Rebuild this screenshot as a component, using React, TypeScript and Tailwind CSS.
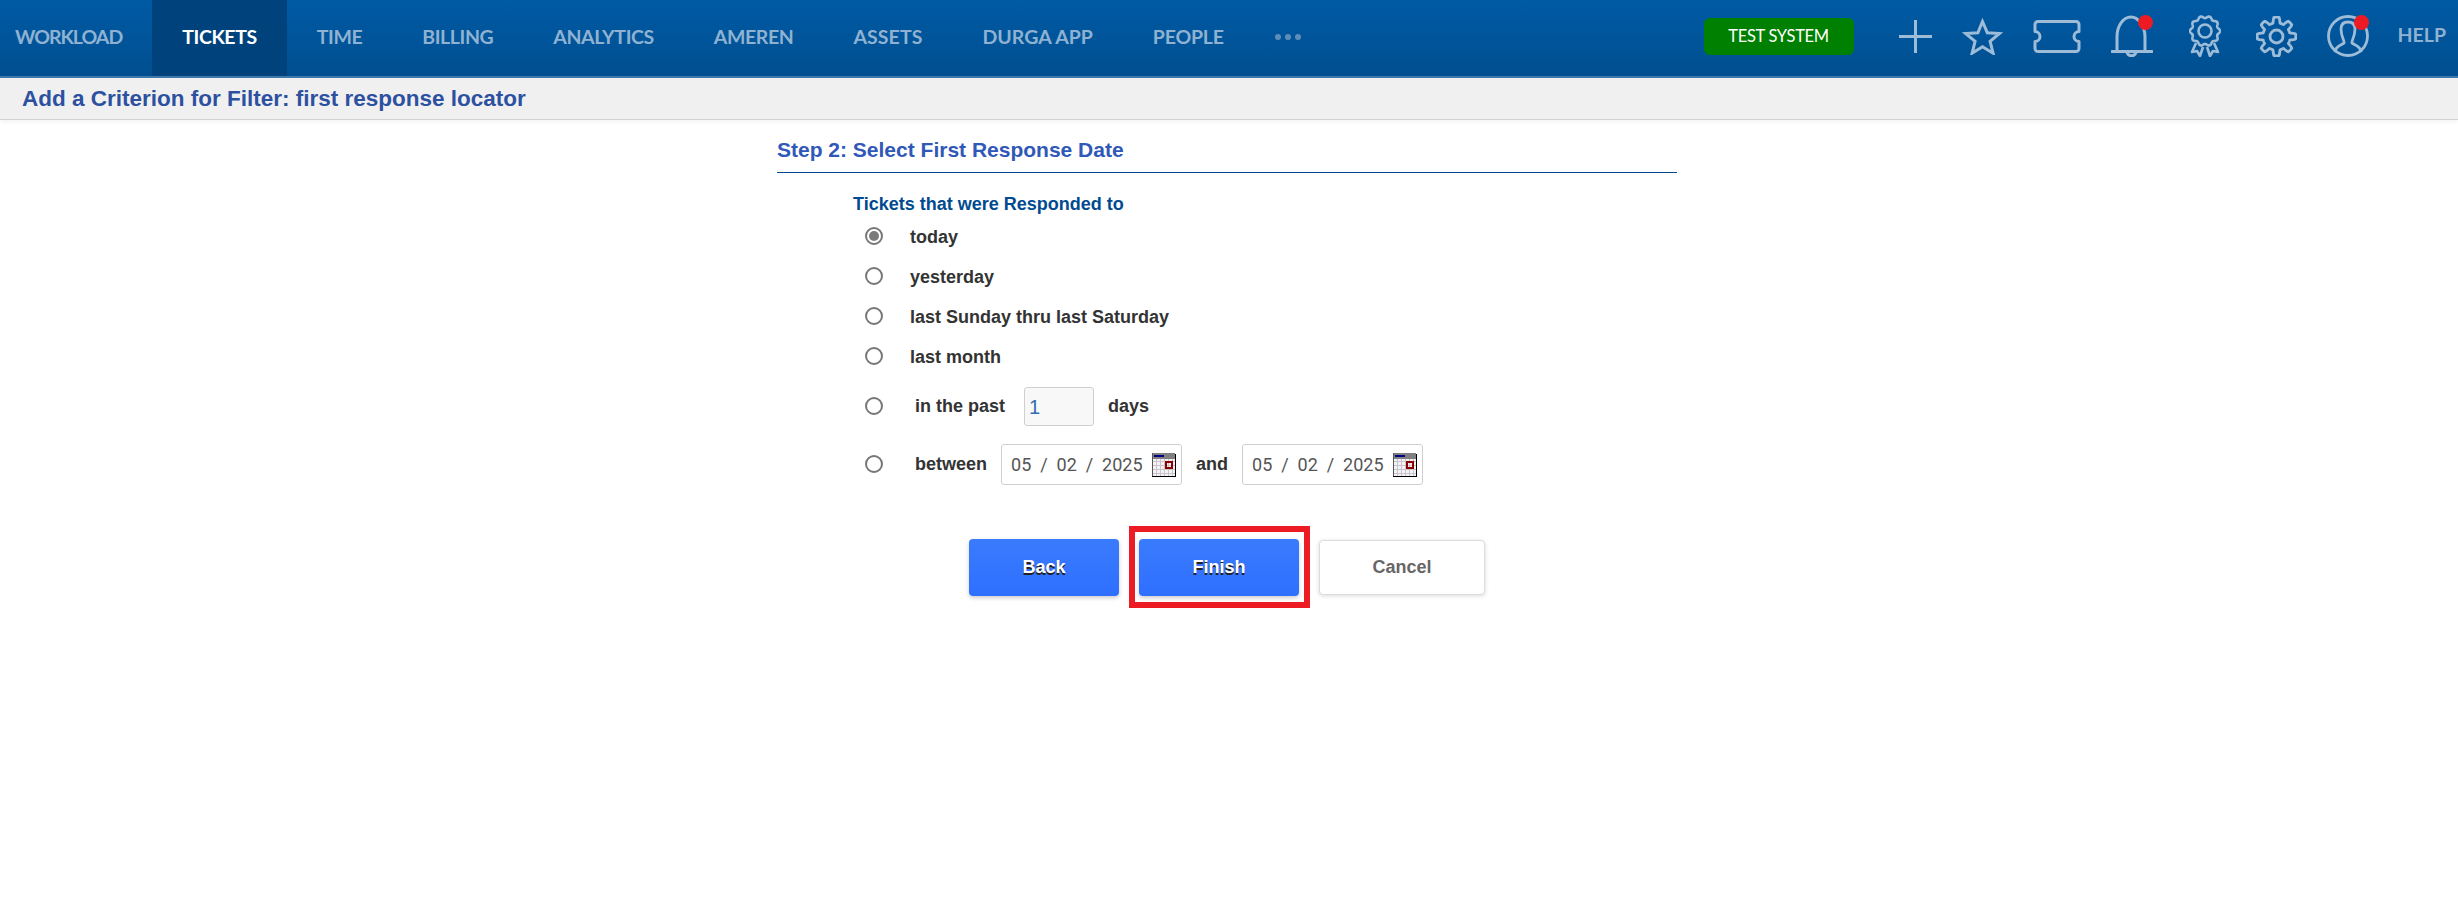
import { Fragment } from 'react';

const NAV_ITEMS = [
  { label: 'TICKETS', track: 'tracking-[-0.4px]' },
  { label: 'TIME', track: 'tracking-[-0.4px]' },
  { label: 'BILLING', track: 'tracking-[-0.4px]' },
  { label: 'ANALYTICS', track: 'tracking-[-0.4px]' },
  { label: 'AMEREN', track: 'tracking-[-0.4px]' },
  { label: 'ASSETS', track: 'tracking-[0.1px]' },
  { label: 'DURGA APP', track: 'tracking-[0px]' },
  { label: 'PEOPLE', track: 'tracking-[-0.2px]' },
];

// outline of a gear or rosette, radius wobbles around the centre
function wavyPath(cx: number, cy: number, r: number, amp: number, lobes: number, sharp: number) {
  const pts: string[] = [];
  for (let i = 0; i < 240; i++) {
    const a = (i / 240) * Math.PI * 2;
    const wave = Math.max(-1, Math.min(1, Math.cos(a * lobes) * sharp));
    const rad = r + amp * wave;
    pts.push(`${(cx + rad * Math.cos(a)).toFixed(2)} ${(cy + rad * Math.sin(a)).toFixed(2)}`);
  }
  return `M${pts.join('L')}Z`;
}

function Badge() {
  return <span className="absolute right-0 top-0 w-[15px] h-[15px] rounded-full bg-[#ed1c24]" />;
}

function HeaderIcons() {
  return (
    <div className="flex items-center gap-[30px] ml-[45px] text-[#9dbcd8]">
      <svg className="w-[33px] h-[33px]" viewBox="0 0 33 33" fill="none" stroke="currentColor" strokeWidth="3">
        <path d="M16.5 0v33M0 16.5h33" />
      </svg>
      <svg className="w-[41px] h-[37px]" viewBox="0 0 41 37" fill="none" stroke="currentColor" strokeWidth="3">
        <path d="M20.5 3.5l4.8 11.2 12 .9-9.2 7.8 3 11.8-10.6-6.4-10.4 6.4 3-11.8-9.4-7.8 12.2-.9z" />
      </svg>
      <svg className="w-[48px] h-[33px]" viewBox="0 0 48 33" fill="none" stroke="currentColor" strokeWidth="3" strokeLinejoin="round">
        <path d="M5 1.5h38a3 3 0 0 1 3 3v7a5 5 0 0 0 0 10v7a3 3 0 0 1-3 3H5a3 3 0 0 1-3-3v-7a5 5 0 0 0 0-10v-7a3 3 0 0 1 3-3z" />
      </svg>
      <div className="relative w-[42px] h-[42px]">
        <svg className="w-[42px] h-[42px]" viewBox="0 0 42 42" fill="none" stroke="currentColor" strokeWidth="3" strokeLinecap="round">
          <path d="M6 36c0-4 0-9 0-14C6 11 12 2 20 2c7 0 14 9 14 20v14" />
          <path d="M1 36.5h40" />
          <path d="M16 37c1 5 8 5 9 0" />
        </svg>
        <Badge />
      </div>
      <svg className="ml-[6px] w-[32px] h-[42px]" viewBox="0 0 32 42" fill="none" stroke="currentColor" strokeWidth="2.6">
        <path d={wavyPath(16, 16, 14, 1.1, 10, 1)} />
        <circle cx="16" cy="16" r="6.5" />
        <path d="M7 28l-4 9 5-1 3 5 3-9M25 28l4 9-5-1-3 5-3-9" strokeLinejoin="round" />
      </svg>
      <svg className="ml-[5px] w-[41px] h-[41px]" viewBox="0 0 41 41" fill="none" stroke="currentColor" strokeWidth="2.8" strokeLinejoin="round">
        <path d={wavyPath(20.5, 20.5, 16.5, 2.8, 8, 2.2)} />
        <circle cx="20.5" cy="20.5" r="6.5" />
      </svg>
      <div className="relative w-[42px] h-[42px]">
        <svg className="w-[42px] h-[42px]" viewBox="0 0 42 42" fill="none" stroke="currentColor" strokeWidth="2.8" strokeLinecap="round">
          <circle cx="21" cy="21" r="19.5" />
          <path d="M8 36c1-5 6-6 9-8 1-2-3-6-3-14 0-5 3-7 7-7s7 2 7 7c0 8-4 12-3 14 3 2 8 3 9 8" />
        </svg>
        <Badge />
      </div>
    </div>
  );
}

function TopNav() {
  return (
    <header className="h-[78px] flex items-stretch bg-gradient-to-b from-[#005aa4] to-[#004f90] border-b-2 border-[#3f78ad] font-['Lato',sans-serif]">
      <div className="flex items-center pl-[15px] pr-[30px] pb-[2px] text-[19.5px] font-bold tracking-[-1px] text-[#8fb2d2]">WORKLOAD</div>
      {NAV_ITEMS.map((item, idx) => (
        <div
          key={item.label}
          className={`flex items-center px-[30px] pb-[2px] text-[19.5px] font-bold ${item.track} ${
            idx === 0 ? 'bg-[#00427c] text-white' : 'text-[#8fb2d2]'
          }`}
        >
          {item.label}
        </div>
      ))}
      <div className="flex items-center gap-[4px] ml-[21px] pb-[3px]">
        <span className="w-[6px] h-[6px] rounded-full bg-[#5f8db8]" />
        <span className="w-[6px] h-[6px] rounded-full bg-[#5f8db8]" />
        <span className="w-[6px] h-[6px] rounded-full bg-[#5f8db8]" />
      </div>
      <div className="ml-auto flex items-center pr-[12px] pb-[4px]">
        <div className="w-[150px] h-[37px] rounded-[6px] bg-[#008000] flex items-center justify-center text-white text-[16.5px] font-normal tracking-[-0.3px]">
          TEST SYSTEM
        </div>
        <HeaderIcons />
        <span className="ml-[29px] pb-[2px] text-[19.5px] font-bold text-[#8fb2d2]">HELP</span>
      </div>
    </header>
  );
}

function Radio({ checked }: { checked?: boolean }) {
  return (
    <span className="w-[18px] h-[18px] mb-[2px] shrink-0 rounded-full border-2 border-[#777] bg-white flex items-center justify-center">
      {checked && <span className="w-[10px] h-[10px] rounded-full bg-[#7a7a7a]" />}
    </span>
  );
}

function CalendarIcon() {
  return (
    <svg className="w-[24px] h-[24px] shrink-0" viewBox="0 0 24 24" shapeRendering="crispEdges">
      <rect x="0" y="0" width="23" height="23" fill="#f4f2f2" />
      <rect x="0" y="0" width="23" height="6" fill="#808080" />
      <rect x="2" y="2" width="10" height="2" fill="#000080" />
      {[4, 8, 12, 16, 20].map((p) => (
        <Fragment key={p}>
          <rect x={p} y="6" width="1" height="17" fill="#c9c4cf" />
          <rect x="0" y={p + 4} width="23" height="1" fill="#c9c4cf" />
        </Fragment>
      ))}
      <rect x="14" y="9" width="6" height="6" fill="none" stroke="#8b0000" strokeWidth="1.5" />
      <rect x="23" y="1" width="1" height="23" fill="#000" />
      <rect x="0" y="23" width="24" height="1" fill="#000" />
      <rect x="0" y="0" width="1" height="23" fill="#555" />
    </svg>
  );
}

function DateField() {
  return (
    <div className="w-[181px] h-[41px] shrink-0 rounded-[3px] border border-[#cfcfcf] flex items-center pl-[9px] pr-[5px] justify-between font-['Roboto',sans-serif] text-[18px] font-normal text-[#555]">
      <span className="whitespace-pre">05  /  02  /  2025</span>
      <CalendarIcon />
    </div>
  );
}

const SIMPLE_OPTIONS = [
  { label: 'today', checked: true },
  { label: 'yesterday' },
  { label: 'last Sunday thru last Saturday' },
  { label: 'last month' },
];

export default function App() {
  return (
    <div className="w-[2458px] h-[898px] bg-white overflow-hidden font-['Liberation_Sans',Arial,sans-serif]">
      <TopNav />
      <div className="h-[42px] pl-[22px] flex items-center bg-[#f0f0f0] border-b border-[#d2d2d2] shadow-[0_2px_4px_rgba(0,0,0,0.05)] text-[22.5px] font-bold text-[#2d50a0]">
        Add a Criterion for Filter: first response locator
      </div>

      <main className="ml-[777px] w-[900px]">
        <h2 className="h-[53px] pt-[19px] border-b border-[#00478f] text-[21px] leading-[22px] font-bold text-[#3058b8]">
          Step 2: Select First Response Date
        </h2>

        <div className="pl-[76px] pt-[21px] text-[18px] font-bold text-[#333]">
          <div className="h-[20px] leading-[20px] text-[#004a8f]">Tickets that were Responded to</div>
          <div className="mt-[3px] flex flex-col">
            {SIMPLE_OPTIONS.map((opt) => (
              <div key={opt.label} className="h-[40px] flex items-center pl-[12px]">
                <Radio checked={opt.checked} />
                <span className="ml-[27px]">{opt.label}</span>
              </div>
            ))}
          </div>

          <div className="mt-[10px] h-[39px] flex items-center pl-[12px]">
            <Radio />
            <span className="ml-[32px]">in the past</span>
            <div className="ml-[19px] w-[70px] h-[39px] rounded-[3px] border border-[#cfcfcf] bg-[#f8f8f8] pl-[4px] flex items-center text-[20px] font-normal text-[#2f6db5]">
              1
            </div>
            <span className="ml-[14px]">days</span>
          </div>

          <div className="mt-[18px] flex items-center pl-[12px]">
            <Radio />
            <span className="ml-[32px]">between</span>
            <div className="ml-[14px]">
              <DateField />
            </div>
            <span className="mx-[14px]">and</span>
            <DateField />
          </div>
        </div>

        <div className="mt-[41px] ml-[192px] flex items-center text-[18px] font-bold">
          <button className="w-[150px] h-[57px] rounded-[4px] bg-gradient-to-b from-[#3a7bfd] to-[#2f6fff] text-white [text-shadow:0_2px_0_#222] shadow-[0_2px_4px_rgba(0,0,0,0.2)]">
            Back
          </button>
          <div className="ml-[10px] w-[181px] h-[82px] border-[6px] border-[#ed1c24] pl-[4px] flex items-center">
            <button className="w-[160px] h-[57px] rounded-[4px] bg-gradient-to-b from-[#3a7bfd] to-[#2f6fff] text-white [text-shadow:0_2px_0_#222] shadow-[0_2px_4px_rgba(0,0,0,0.2)]">
              Finish
            </button>
          </div>
          <button className="ml-[9px] w-[166px] h-[55px] rounded-[4px] border border-[#dcdcdc] bg-white text-[#666] shadow-[0_1px_4px_rgba(0,0,0,0.15)]">
            Cancel
          </button>
        </div>
      </main>
    </div>
  );
}
